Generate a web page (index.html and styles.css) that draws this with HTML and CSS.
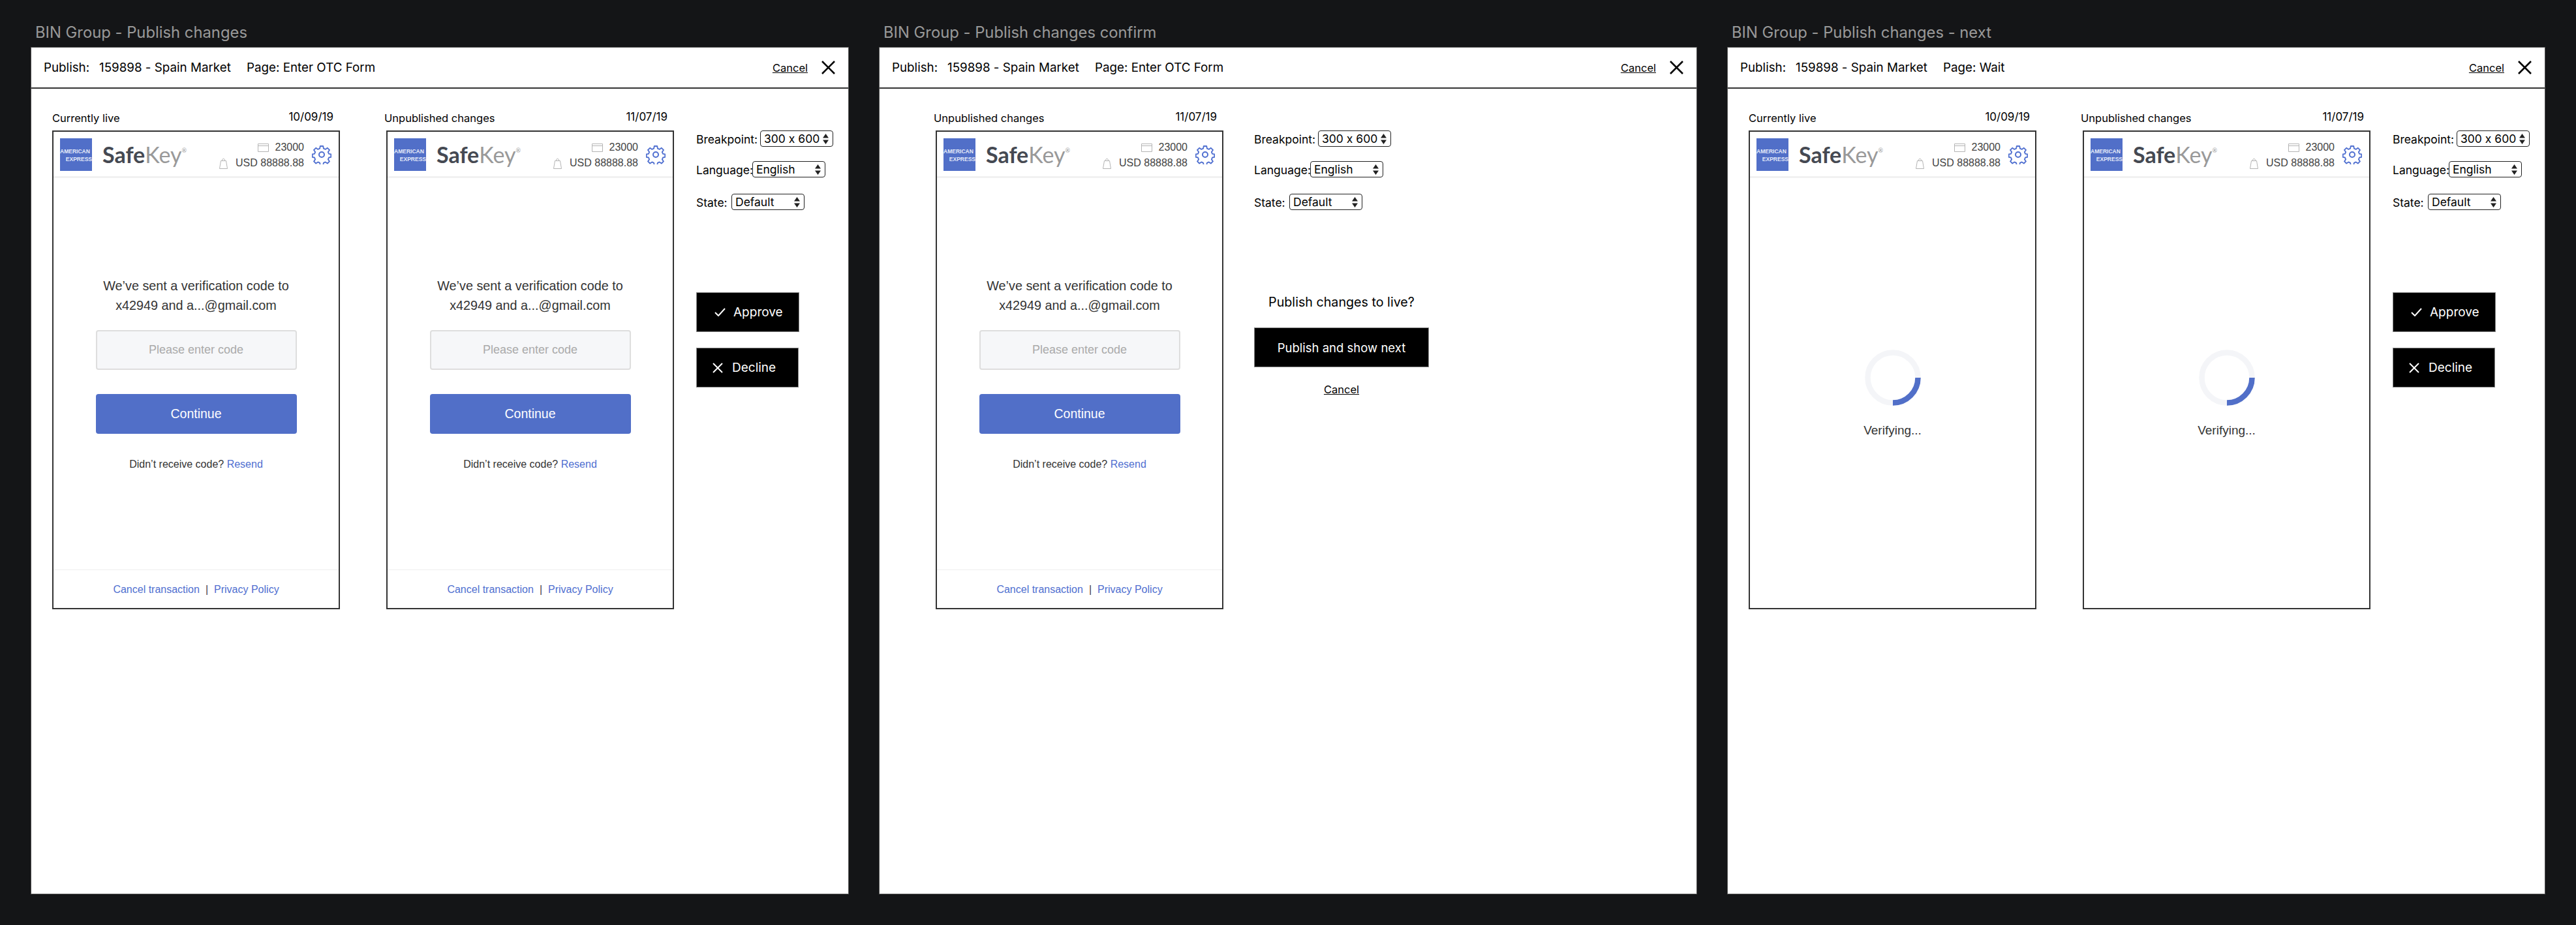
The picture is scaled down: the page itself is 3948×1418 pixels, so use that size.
FILE: index.html
```html
<!DOCTYPE html>
<html lang="en">
<head>
    <meta charset="UTF-8">
    <title>BIN Group - Publish changes</title>
    <link rel="stylesheet" href="styles.css">
</head>
<body>
    <svg class="icon-defs" xmlns="http://www.w3.org/2000/svg">
        <symbol id="icon-close" viewBox="0 0 21 21">
            <path d="M1 1l19 19M20 1L1 20" fill="none" stroke="currentColor" stroke-width="2.6" />
        </symbol>
        <symbol id="icon-card" viewBox="0 0 17 13">
            <path d="M.5.5h16v12H.5zM.5 3.500h16" fill="none" stroke="#b4b4b4" />
        </symbol>
        <symbol id="icon-bag" viewBox="0 0 13 17">
            <path d="M2.500 4.500h8l2 12H.5zM4.500 4.500C4.500 .2 8.500 .2 8.500 4.500" fill="none" stroke="#b4b4b4" />
        </symbol>
        <symbol id="icon-gear" viewBox="0 0 30 30">
            <path d="M12.600 1.500h4.800l.8 4 3 1.300 3.400-2.300 3.400 3.400-2.300 3.400 1.300 3 3.500.7v4.800l-3.500.7-1.300 3 2.300 3.400-3.400 3.400-3.400-2.300-3 1.300-.8 3.700h-4.800l-.8-3.700-3-1.300-3.400 2.300-3.400-3.400 2.300-3.400-1.300-3-3.500-.7v-4.800l3.500-.7 1.300-3-2.300-3.400 3.400-3.400 3.400 2.300 3-1.300z" transform="translate(15 15) scale(.92) translate(-15 -15.600)" fill="none" stroke="currentColor" stroke-width="2" stroke-linejoin="round" />
            <circle cx="15" cy="15" r="4" fill="none" stroke="currentColor" stroke-width="2" />
        </symbol>
        <symbol id="icon-check" viewBox="0 0 17 13">
            <path d="M1 7l5 5L16 1" fill="none" stroke="currentColor" stroke-width="2" />
        </symbol>
        <symbol id="icon-cross" viewBox="0 0 16 16">
            <path d="M1 1l14 14M15 1L1 15" fill="none" stroke="currentColor" stroke-width="2" />
        </symbol>
        <symbol id="icon-arrows" viewBox="0 0 9 16">
            <path d="M4.500 0L9 6.500H0zM4.500 16L0 9.500h9z" fill="currentColor" />
        </symbol>
    </svg>

    <!-- first frame -->
    <section class="artboard">
        <h2 class="artboard-title">BIN Group - Publish changes</h2>
        <div class="frame">
            <header class="frame-header">
                <div class="frame-crumbs">
                    <span class="crumb-label">Publish:</span>
                    <span class="crumb-market">159898 - Spain Market</span>
                    <span>Page: Enter OTC Form</span>
                </div>
                <a href="#" class="cancel-link">Cancel</a>
                <svg class="close-icon"><use href="#icon-close" /></svg>
            </header>
            <div class="frame-body">
                <div class="preview preview-live">
                    <div class="preview-head"><span>Currently live</span><span class="preview-date">10/09/19</span></div>
                    <div class="phone">
                        <div class="phone-top">
                            <div class="amex"><span>AMERICAN</span><span>EXPRESS</span></div>
                            <div class="safekey"><b>Safe</b>Key<sup>®</sup></div>
                            <div class="txn">
                                <div class="txn-row"><svg class="txn-card"><use href="#icon-card" /></svg>23000</div>
                                <div class="txn-row"><svg class="txn-bag"><use href="#icon-bag" /></svg>USD 88888.88</div>
                            </div>
                            <svg class="gear"><use href="#icon-gear" /></svg>
                        </div>
                        <div class="phone-main otc">
                            <p class="otc-text">We’ve sent a verification code to<br>x42949 and a...@gmail.com</p>
                            <input class="otc-input" placeholder="Please enter code">
                            <button class="otc-button">Continue</button>
                            <p class="otc-resend">Didn’t receive code? <a href="#">Resend</a></p>
                        </div>
                        <div class="phone-foot"><a href="#">Cancel transaction</a><span>|</span><a href="#">Privacy Policy</a></div>
                    </div>
                </div>
                <div class="preview preview-draft">
                    <div class="preview-head"><span>Unpublished changes</span><span class="preview-date">11/07/19</span></div>
                    <div class="phone">
                        <div class="phone-top">
                            <div class="amex"><span>AMERICAN</span><span>EXPRESS</span></div>
                            <div class="safekey"><b>Safe</b>Key<sup>®</sup></div>
                            <div class="txn">
                                <div class="txn-row"><svg class="txn-card"><use href="#icon-card" /></svg>23000</div>
                                <div class="txn-row"><svg class="txn-bag"><use href="#icon-bag" /></svg>USD 88888.88</div>
                            </div>
                            <svg class="gear"><use href="#icon-gear" /></svg>
                        </div>
                        <div class="phone-main otc">
                            <p class="otc-text">We’ve sent a verification code to<br>x42949 and a...@gmail.com</p>
                            <input class="otc-input" placeholder="Please enter code">
                            <button class="otc-button">Continue</button>
                            <p class="otc-resend">Didn’t receive code? <a href="#">Resend</a></p>
                        </div>
                        <div class="phone-foot"><a href="#">Cancel transaction</a><span>|</span><a href="#">Privacy Policy</a></div>
                    </div>
                </div>
                <div class="controls">
                    <div class="field field-breakpoint"><label>Breakpoint:</label><div class="select-wrap"><select><option>300 x 600</option></select><svg class="select-arrows"><use href="#icon-arrows" /></svg></div></div>
                    <div class="field field-language"><label>Language:</label><div class="select-wrap"><select><option>English</option></select><svg class="select-arrows"><use href="#icon-arrows" /></svg></div></div>
                    <div class="field field-state"><label>State:</label><div class="select-wrap"><select><option>Default</option></select><svg class="select-arrows"><use href="#icon-arrows" /></svg></div></div>
                    <div class="actions">
                        <button class="action action-approve"><svg class="action-check"><use href="#icon-check" /></svg>Approve</button>
                        <button class="action action-decline"><svg class="action-cross"><use href="#icon-cross" /></svg>Decline</button>
                    </div>
                </div>
            </div>
        </div>
    </section>

    <!-- confirm frame -->
    <section class="artboard">
        <h2 class="artboard-title">BIN Group - Publish changes confirm</h2>
        <div class="frame">
            <header class="frame-header">
                <div class="frame-crumbs">
                    <span class="crumb-label">Publish:</span>
                    <span class="crumb-market">159898 - Spain Market</span>
                    <span>Page: Enter OTC Form</span>
                </div>
                <a href="#" class="cancel-link">Cancel</a>
                <svg class="close-icon"><use href="#icon-close" /></svg>
            </header>
            <div class="frame-body frame-body-confirm">
                <div class="preview preview-confirm">
                    <div class="preview-head"><span>Unpublished changes</span><span class="preview-date">11/07/19</span></div>
                    <div class="phone">
                        <div class="phone-top">
                            <div class="amex"><span>AMERICAN</span><span>EXPRESS</span></div>
                            <div class="safekey"><b>Safe</b>Key<sup>®</sup></div>
                            <div class="txn">
                                <div class="txn-row"><svg class="txn-card"><use href="#icon-card" /></svg>23000</div>
                                <div class="txn-row"><svg class="txn-bag"><use href="#icon-bag" /></svg>USD 88888.88</div>
                            </div>
                            <svg class="gear"><use href="#icon-gear" /></svg>
                        </div>
                        <div class="phone-main otc">
                            <p class="otc-text">We’ve sent a verification code to<br>x42949 and a...@gmail.com</p>
                            <input class="otc-input" placeholder="Please enter code">
                            <button class="otc-button">Continue</button>
                            <p class="otc-resend">Didn’t receive code? <a href="#">Resend</a></p>
                        </div>
                        <div class="phone-foot"><a href="#">Cancel transaction</a><span>|</span><a href="#">Privacy Policy</a></div>
                    </div>
                </div>
                <div class="controls controls-confirm">
                    <div class="field field-breakpoint"><label>Breakpoint:</label><div class="select-wrap"><select><option>300 x 600</option></select><svg class="select-arrows"><use href="#icon-arrows" /></svg></div></div>
                    <div class="field field-language"><label>Language:</label><div class="select-wrap"><select><option>English</option></select><svg class="select-arrows"><use href="#icon-arrows" /></svg></div></div>
                    <div class="field field-state"><label>State:</label><div class="select-wrap"><select><option>Default</option></select><svg class="select-arrows"><use href="#icon-arrows" /></svg></div></div>
                    <div class="confirm">
                        <p class="confirm-text">Publish changes to live?</p>
                        <button class="action action-publish">Publish and show next</button>
                        <a href="#" class="confirm-cancel">Cancel</a>
                    </div>
                </div>
            </div>
        </div>
    </section>

    <!-- next frame -->
    <section class="artboard">
        <h2 class="artboard-title">BIN Group - Publish changes - next</h2>
        <div class="frame">
            <header class="frame-header">
                <div class="frame-crumbs">
                    <span class="crumb-label">Publish:</span>
                    <span class="crumb-market">159898 - Spain Market</span>
                    <span>Page: Wait</span>
                </div>
                <a href="#" class="cancel-link">Cancel</a>
                <svg class="close-icon"><use href="#icon-close" /></svg>
            </header>
            <div class="frame-body">
                <div class="preview preview-live">
                    <div class="preview-head"><span>Currently live</span><span class="preview-date">10/09/19</span></div>
                    <div class="phone">
                        <div class="phone-top">
                            <div class="amex"><span>AMERICAN</span><span>EXPRESS</span></div>
                            <div class="safekey"><b>Safe</b>Key<sup>®</sup></div>
                            <div class="txn">
                                <div class="txn-row"><svg class="txn-card"><use href="#icon-card" /></svg>23000</div>
                                <div class="txn-row"><svg class="txn-bag"><use href="#icon-bag" /></svg>USD 88888.88</div>
                            </div>
                            <svg class="gear"><use href="#icon-gear" /></svg>
                        </div>
                        <div class="phone-main wait">
                            <svg class="spinner" viewBox="0 0 86 86">
                                <circle cx="43" cy="43" r="38.500" fill="none" stroke="#f4f5f8" stroke-width="8.500" />
                                <path d="M81.500 43A38.500 38.500 0 0 1 43 81.500" fill="none" stroke="#516fc8" stroke-width="8.500" />
                            </svg>
                            <p class="wait-text">Verifying...</p>
                        </div>
                    </div>
                </div>
                <div class="preview preview-draft">
                    <div class="preview-head"><span>Unpublished changes</span><span class="preview-date">11/07/19</span></div>
                    <div class="phone">
                        <div class="phone-top">
                            <div class="amex"><span>AMERICAN</span><span>EXPRESS</span></div>
                            <div class="safekey"><b>Safe</b>Key<sup>®</sup></div>
                            <div class="txn">
                                <div class="txn-row"><svg class="txn-card"><use href="#icon-card" /></svg>23000</div>
                                <div class="txn-row"><svg class="txn-bag"><use href="#icon-bag" /></svg>USD 88888.88</div>
                            </div>
                            <svg class="gear"><use href="#icon-gear" /></svg>
                        </div>
                        <div class="phone-main wait">
                            <svg class="spinner" viewBox="0 0 86 86">
                                <circle cx="43" cy="43" r="38.500" fill="none" stroke="#f4f5f8" stroke-width="8.500" />
                                <path d="M81.500 43A38.500 38.500 0 0 1 43 81.500" fill="none" stroke="#516fc8" stroke-width="8.500" />
                            </svg>
                            <p class="wait-text">Verifying...</p>
                        </div>
                    </div>
                </div>
                <div class="controls">
                    <div class="field field-breakpoint"><label>Breakpoint:</label><div class="select-wrap"><select><option>300 x 600</option></select><svg class="select-arrows"><use href="#icon-arrows" /></svg></div></div>
                    <div class="field field-language"><label>Language:</label><div class="select-wrap"><select><option>English</option></select><svg class="select-arrows"><use href="#icon-arrows" /></svg></div></div>
                    <div class="field field-state"><label>State:</label><div class="select-wrap"><select><option>Default</option></select><svg class="select-arrows"><use href="#icon-arrows" /></svg></div></div>
                    <div class="actions">
                        <button class="action action-approve"><svg class="action-check"><use href="#icon-check" /></svg>Approve</button>
                        <button class="action action-decline"><svg class="action-cross"><use href="#icon-cross" /></svg>Decline</button>
                    </div>
                </div>
            </div>
        </div>
    </section>
</body>
</html>
```
FILE: styles.css
```css
* {
    margin: 0;
    padding: 0;
    box-sizing: border-box;
}

body {
    font-family: Inter, 'Liberation Sans', sans-serif;
    font-feature-settings: "calt" 0;
    background: #141517;
    color: #000;
    height: 1418px;
    padding: 0 48px 48px;
    display: flex;
    gap: 48px;
    overflow: hidden;
}

a {
    color: inherit;
}

.icon-defs {
    display: none;
}

.artboard {
    width: 1252px;
    display: flex;
    flex-direction: column;
}

.artboard-title {
    height: 73px;
    padding: 36px 0 0 6px;
    font-size: 23.800px;
    font-weight: 400;
    line-height: 28px;
    color: #999;
}

.frame {
    flex: 1;
    background: white;
    box-shadow: 0 0 0 1px #555;
    display: flex;
    flex-direction: column;
}

.frame-header {
    height: 63px;
    border-bottom: 2px solid #333;
    padding: 0 20px 0 19px;
    display: flex;
    align-items: center;
}

.frame-crumbs {
    flex: 1;
    font-size: 18.800px;
    display: flex;
}

.crumb-label {
    width: 85px;
}

.crumb-market {
    width: 226px;
}

.cancel-link {
    font-size: 16.500px;
    margin-right: 21px;
}

.close-icon {
    width: 21px;
    height: 21px;
}

.frame-body {
    flex: 1;
    padding: 33px 0 0 32px;
    display: flex;
}

.frame-body-confirm {
    padding-left: 86px;
}

.preview {
    width: 441px;
}

.preview-live {
    margin-right: 71px;
}

.preview-draft {
    margin-right: 34px;
}

.preview-confirm {
    margin-right: 47px;
}

.preview-head {
    height: 24px;
    margin-bottom: 7px;
    padding-right: 10px;
    font-size: 16.500px;
    display: flex;
    justify-content: space-between;
    align-items: center;
}

.preview-draft .preview-head,
.preview-confirm .preview-head {
    margin-left: -3px;
}

.preview-date {
    position: relative;
    top: -2px;
    font-size: 17px;
}

.phone {
    height: 734px;
    border: 2px solid #333;
    font-family: 'Liberation Sans', Arial, sans-serif;
    display: flex;
    flex-direction: column;
}

.phone-top {
    height: 71px;
    padding: 10px 11px 0 10px;
    border-bottom: 3px solid #f1f1f1;
    display: flex;
    align-items: flex-start;
}

.amex {
    width: 49px;
    height: 50px;
    flex-shrink: 0;
    background: #516fc8;
    font-size: 8.500px;
    font-weight: 700;
    line-height: 12px;
    color: #e6ebf9;
    padding-top: 14px;
    display: flex;
    flex-direction: column;
}

.amex span:last-child {
    text-align: right;
}

.safekey {
    margin-left: 16px;
    font-family: Lato, sans-serif;
    font-size: 34px;
    line-height: 50px;
    color: #999;
    white-space: nowrap;
}

.safekey b {
    font-weight: 700;
    color: #454952;
}

.safekey sup {
    font-size: 9px;
    vertical-align: 16px;
    line-height: 0;
}

.txn {
    flex: 1;
    font-size: 16px;
    color: #444;
    white-space: nowrap;
    display: flex;
    flex-direction: column;
    align-items: flex-end;
    gap: 6px;
    padding-top: 5px;
}

.txn-row {
    height: 18px;
    line-height: 18px;
    display: flex;
    align-items: center;
}

.txn svg {
    display: block;
    flex-shrink: 0;
}

.txn-card {
    width: 17px;
    height: 13px;
    margin-right: 10px;
}

.txn-bag {
    width: 13px;
    height: 17px;
    margin-right: 12px;
}

.gear {
    width: 30px;
    height: 30px;
    flex-shrink: 0;
    margin: 10px 0 0 12px;
    color: #4f6fd0;
}

.phone-main {
    flex: 1;
    display: flex;
    flex-direction: column;
    align-items: center;
}

.otc {
    padding-top: 150px;
}

.otc-text {
    font-size: 19.800px;
    line-height: 30px;
    color: #333;
    text-align: center;
}

.otc-input {
    width: 308px;
    height: 61px;
    margin-top: 23px;
    border: 2px solid #dedede;
    border-radius: 4px;
    background: #f6f7f9;
    font-family: inherit;
    font-size: 18px;
    text-align: center;
}

.otc-input::placeholder {
    color: #aaa;
    opacity: 1;
}

.otc-button {
    width: 308px;
    height: 61px;
    margin-top: 37px;
    border: none;
    border-radius: 4px;
    background: #516fc8;
    color: white;
    font-family: inherit;
    font-size: 19.500px;
}

.otc-resend {
    margin-top: 38px;
    font-size: 16px;
    line-height: 18px;
    color: #333;
}

.otc-resend a,
.phone-foot a {
    color: #4f6fd0;
    text-decoration: none;
}

.phone-foot {
    height: 59px;
    padding-top: 2px;
    border-top: 1px solid #eee;
    font-size: 16px;
    color: #444;
    display: flex;
    justify-content: center;
    align-items: center;
    gap: 9px;
}

.wait {
    padding-top: 263px;
}

.spinner {
    width: 86px;
    height: 86px;
}

.wait-text {
    margin-top: 27px;
    font-size: 19px;
    line-height: 22px;
    color: #333;
}

.controls {
    padding-top: 31px;
    font-size: 17.500px;
}

.field {
    height: 25px;
    display: flex;
    align-items: center;
}

.field label {
    position: relative;
    top: 1px;
}

.field-breakpoint label {
    width: 98px;
}

.field-language {
    margin-top: 22px;
}

.field-language label {
    width: 86px;
}

.field-state {
    margin-top: 25px;
}

.field-state label {
    width: 54px;
}

.select-wrap {
    position: relative;
    width: 112px;
    height: 25px;
}

.select-wrap select {
    appearance: none;
    width: 100%;
    height: 100%;
    border: 1.500px solid #222;
    border-radius: 4px;
    background: white;
    padding: 0 0 0 5px;
    font-family: Inter, sans-serif;
    font-feature-settings: "calt" 0;
    font-size: 17.500px;
    color: #000;
}

.select-arrows {
    position: absolute;
    top: 5px;
    right: 7px;
    width: 9px;
    height: 16px;
    color: #222;
    pointer-events: none;
}

.actions {
    margin-top: 126px;
    display: flex;
    flex-direction: column;
    align-items: flex-start;
    gap: 24px;
}

.action {
    height: 61px;
    border: 1px solid #888;
    background: black;
    color: white;
    font-family: Inter, sans-serif;
    font-size: 19px;
    display: flex;
    align-items: center;
}

.action-approve {
    width: 158px;
    padding-left: 27px;
}

.action-decline {
    width: 157px;
    padding-left: 24px;
}

.action-check {
    width: 17px;
    height: 13px;
    margin-right: 12px;
}

.action-cross {
    width: 16px;
    height: 16px;
    margin-right: 14px;
}

.action-publish {
    width: 268px;
    font-size: 18.500px;
    justify-content: center;
}

.confirm {
    width: 268px;
    margin-top: 126px;
    display: flex;
    flex-direction: column;
    align-items: center;
}

.confirm-text {
    font-size: 19.700px;
    line-height: 30px;
    margin-bottom: 24px;
}

.confirm-cancel {
    margin-top: 24px;
    font-size: 16.500px;
}
```
